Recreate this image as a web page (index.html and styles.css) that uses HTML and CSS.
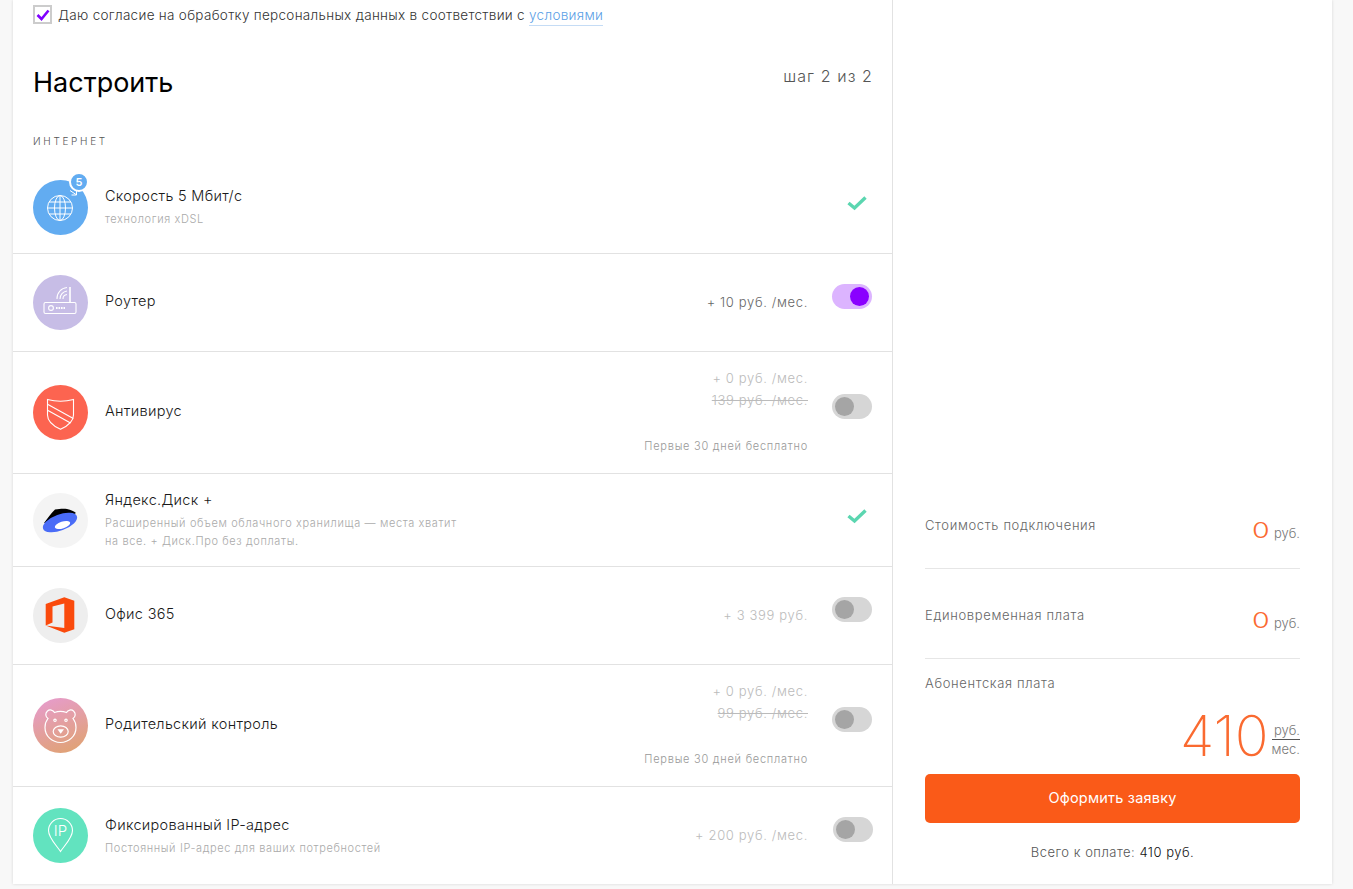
FILE: index.html
```html
<!DOCTYPE html>
<html lang="ru">
<head>
<meta charset="utf-8">
<title>Настроить</title>
<link rel="stylesheet" href="styles.css">
</head>
<body>
<main class="card">
  <section class="left">
    <label class="consent">
      <span class="checkbox"><svg width="14" height="12" viewBox="0 0 14 12"><path d="M1.5 6 L5.5 10 L12.5 1.5" fill="none" stroke="#8000ff" stroke-width="2.6"/></svg></span>
      <span>Даю согласие на обработку персональных данных в соответствии с <a class="link">условиями</a></span>
    </label>
    <header class="head">
      <h1>Настроить</h1>
      <span class="step">шаг 2 из 2</span>
    </header>
    <div class="group">ИНТЕРНЕТ</div>

    <div class="row row-first">
      <div class="ico">
        <svg width="55" height="55" viewBox="0 0 55 55"><circle cx="27.5" cy="27.5" r="27.5" fill="#62acf1"/><g fill="none" stroke="#fff" stroke-width="1"><circle cx="27" cy="28" r="12.5"/><ellipse cx="27" cy="28" rx="5.5" ry="12.5"/><path d="M27 15.5V40.5M14.5 28H39.5M16 22H38M16 34H38"/><path d="M37 10.5L43 14.5M43.5 10.5V15H38.5" stroke-width="1"/></g></svg>
        <span class="badge">5</span>
      </div>
      <div class="info"><div class="name">Скорость 5 Мбит/с</div><div class="sub">технология xDSL</div></div>
      <svg class="tick" width="20" height="16" viewBox="0 0 20 16"><path d="M1.5 8L7.5 13L18.5 2.5" fill="none" stroke="#5bd6b0" stroke-width="3.4"/></svg>
    </div>

    <div class="row row-s">
      <div class="ico"><svg width="55" height="55" viewBox="0 0 55 55"><circle cx="27.5" cy="27.5" r="27.5" fill="#c7bde6"/><g fill="none" stroke="#fff" stroke-width="1.1"><rect x="11" y="27.5" width="32" height="11" rx="1.5"/><path d="M37 27V12" stroke-width="1.6"/><circle cx="18" cy="33" r="2.4"/><path d="M23 33H32" stroke-width="2.2" stroke-dasharray="1.6 .9"/><path d="M24 24A11 11 0 0 1 34 12.5M27 24A8 8 0 0 1 34 16M30 24A4.5 4.5 0 0 1 34 19.5"/></g></svg></div>
      <div class="info single"><div class="name">Роутер</div></div>
      <div class="price dark">+ 10 руб. /мес.</div>
      <span class="toggle on"><i></i></span>
    </div>

    <div class="row row-l">
      <div class="ico"><svg width="55" height="55" viewBox="0 0 55 55"><circle cx="27.5" cy="27.5" r="27.5" fill="#fc6450"/><g fill="none" stroke="#fff" stroke-width="1.1"><path d="M14.5 14.5C22 16.5 33 16.5 40.5 14.5V30C40.5 37.5 33 41.8 27.5 44.3C22 41.8 14.5 37.5 14.5 30Z"/><path d="M15 19.5L40.3 33.5M15 25.5L37.5 38"/></g></svg></div>
      <div class="info single"><div class="name">Антивирус</div></div>
      <div class="price-box">
        <div class="price">+ 0 руб. /мес.</div>
        <div class="price old">139 руб. /мес.</div>
        <div class="note">Первые 30 дней бесплатно</div>
      </div>
      <span class="toggle"><i></i></span>
    </div>

    <div class="row row-m">
      <div class="ico"><svg width="55" height="55" viewBox="0 0 55 55"><circle cx="27.5" cy="27.5" r="27.5" fill="#f4f4f4"/><path d="M11 30C15 25 18 20 22 16.5C27 15.5 32 15.5 34 16C38 17 41 18 43 20L30 28Z" fill="#000"/><ellipse cx="27" cy="29.5" rx="18" ry="8" transform="rotate(-20 27 29.5)" fill="#4a6cf7"/><ellipse cx="29.5" cy="32" rx="8" ry="3.4" transform="rotate(-18 29.5 32)" fill="#fff"/></svg></div>
      <div class="info"><div class="name">Яндекс.Диск +</div><div class="sub">Расширенный объем облачного хранилища — места хватит<br>на все. + Диск.Про без доплаты.</div></div>
      <svg class="tick" width="20" height="16" viewBox="0 0 20 16"><path d="M1.5 8L7.5 13L18.5 2.5" fill="none" stroke="#5bd6b0" stroke-width="3.4"/></svg>
    </div>

    <div class="row row-s">
      <div class="ico"><svg width="55" height="55" viewBox="0 0 55 55"><circle cx="27.5" cy="27.5" r="27.5" fill="#eee"/><path fill-rule="evenodd" d="M12.7 16L31.3 9.3L41.3 12.7V41.3L31.3 44.7L12.7 37.5L31.3 40V15.5L19.5 18.5V34.5L12.7 37.5Z" fill="#fa4a0c"/></svg></div>
      <div class="info single"><div class="name">Офис 365</div></div>
      <div class="price lone">+ 3 399 руб.</div>
      <span class="toggle"><i></i></span>
    </div>

    <div class="row row-l">
      <div class="ico"><svg width="55" height="55" viewBox="0 0 55 55"><defs><linearGradient id="bear" x1="0.3" y1="0" x2="0.7" y2="1"><stop offset="0" stop-color="#e69cc9"/><stop offset="1" stop-color="#e0a274"/></linearGradient></defs><circle cx="27.5" cy="27.5" r="27.5" fill="url(#bear)"/><g fill="none" stroke="#fff" stroke-width="1.2"><path d="M15 20.5A4.6 4.6 0 1 1 21.5 14.5C25 13.3 30 13.3 33.5 14.5A4.6 4.6 0 1 1 40 20.5C42 23 43 26.5 43 29.5C43 38 36 44.5 27.5 44.5C19 44.5 12 38 12 29.5C12 26.5 13 23 15 20.5Z"/><ellipse cx="27.7" cy="33.5" rx="7.5" ry="5.7"/><circle cx="22" cy="22.3" r="1.2"/><circle cx="33" cy="22.3" r="1.2"/></g><path d="M24.5 31.2H31L27.7 35.8Z" fill="#fff"/></svg></div>
      <div class="info single"><div class="name">Родительский контроль</div></div>
      <div class="price-box">
        <div class="price">+ 0 руб. /мес.</div>
        <div class="price old">99 руб. /мес.</div>
        <div class="note">Первые 30 дней бесплатно</div>
      </div>
      <span class="toggle"><i></i></span>
    </div>

    <div class="row row-s last">
      <div class="ico"><svg width="55" height="55" viewBox="0 0 55 55"><circle cx="27.5" cy="27.5" r="27.5" fill="#62e3bf"/><path d="M27.5 43.5C24 38 15.5 30 15.5 22.5A12 12 0 0 1 39.5 22.5C39.5 30 31 38 27.5 43.5Z" fill="none" stroke="#fff" stroke-width="1.1"/><text x="27.5" y="28" text-anchor="middle" class="ip">IP</text></svg></div>
      <div class="info"><div class="name">Фиксированный IP-адрес</div><div class="sub">Постоянный IP-адрес для ваших потребностей</div></div>
      <div class="price lone">+ 200 руб. /мес.</div>
      <span class="toggle shift"><i></i></span>
    </div>
  </section>

  <aside class="right">
    <div class="cost">
      <span class="label">Стоимость подключения</span>
      <span class="amount"><b>0</b> руб.</span>
    </div>
    <div class="cost">
      <span class="label">Единовременная плата</span>
      <span class="amount"><b>0</b> руб.</span>
    </div>
    <div class="label monthly">Абонентская плата</div>
    <div class="total">
      <span class="big">410</span>
      <span class="frac"><span>руб.</span><span class="mes">мес.</span></span>
    </div>
    <button class="submit">Оформить заявку</button>
    <p class="sum">Всего к оплате: <em>410 руб.</em></p>
  </aside>
</main>
</body>
</html>
```
FILE: styles.css
```css
* { box-sizing: border-box; }
html, body { margin: 0; height: 889px; overflow: hidden; background: #f8f8f8; }
body { font-family: "Inter", "Noto Sans", sans-serif; font-weight: 300; color: #222; padding-left: 13px; }

.card {
  display: flex;
  width: 1319px;
  height: 884px;
  background: #fff;
  box-shadow: 0 0 3px rgba(0,0,0,.14);
}
.left { width: 880px; border-right: 1px solid #e2e2e2; display: flex; flex-direction: column; }
.right { flex: 1; padding: 0 32px 23px; display: flex; flex-direction: column; justify-content: flex-end; }

.consent { display: flex; align-items: center; gap: 6px; height: 23px; margin: 3px 0 0 20px; font-size: 13.5px; letter-spacing: .3px; color: #333; }
.checkbox { width: 19px; height: 19px; border: 2px solid #ccc; display: flex; align-items: center; justify-content: center; }
.link { color: #5aa0e6; border-bottom: 1px solid #c5dcf5; padding-bottom: 2px; }

.head { display: flex; justify-content: space-between; margin: 28px 19px 0 20px; height: 73px; }
h1 { margin: 13px 0 0; font-size: 27px; line-height: 32px; font-weight: 400; color: #000; }
.step { font-size: 16px; line-height: 22px; margin-top: 11px; color: #555; letter-spacing: 1.1px; }
.group { margin: 0 20px; font-size: 10px; height: 35px; line-height: 24px; letter-spacing: 2.7px; color: #555; font-weight: 300; padding-top: 2px; }

.row { display: flex; align-items: center; padding: 0 20px; border-bottom: 1px solid #e2e2e2; flex: none; }
.row-first { height: 92px; }
.row-s { height: 98px; }
.row-l { height: 122px; }
.row-m { height: 93px; }
.last { border-bottom: 0; height: 97px; }

.ico { position: relative; width: 55px; height: 55px; flex: none; margin-right: 17px; }
.ico svg { display: block; }
.badge { position: absolute; left: 36px; top: -8px; width: 20px; height: 20px; border-radius: 50%; background: #62acf1; border: 2px solid #fff; color: #fff; font-size: 11px; font-weight: 600; line-height: 16px; text-align: center; }
.ip { font-size: 15px; fill: #fff; font-weight: 300; }

.info { flex: 1; margin-top: -2px; }
.info.single { margin-top: -4px; }
.name { font-size: 14.5px; line-height: 20px; color: #1a1a1a; letter-spacing: .3px; }
.sub { font-size: 11px; line-height: 18px; color: #aaa; letter-spacing: .62px; margin-top: 4px; }
.row-m .info { margin-top: -1px; }
.last .info { margin-top: 0; }

.price-box { text-align: right; margin-top: -4px; }
.price { font-size: 13px; line-height: 22px; color: #bbb; letter-spacing: .65px; text-align: right; margin-right: -1px; }
.price.dark { color: #666; margin-top: -1px; }
.price.lone { margin-top: -2px; }
.last .price.lone { margin-right: 0; }
.price.old { text-decoration: line-through; margin-bottom: 27px; }
.note { font-size: 11px; line-height: 16px; color: #999; letter-spacing: .75px; margin-right: -1px; }

.toggle { display: flex; align-items: center; width: 40px; height: 25px; border-radius: 13px; background: #d6d6d6; margin: 0 0 12px 25px; padding: 0 3px; }
.toggle i { display: block; width: 19px; height: 19px; border-radius: 50%; background: #a5a5a5; }
.toggle.on { background: #dcb4ff; justify-content: flex-end; }
.toggle.on i { background: #8a00ff; }
.toggle.shift { margin-right: -1px; }
.tick { margin: 0 5px 9px 0; }

.cost { display: flex; justify-content: space-between; height: 90px; border-bottom: 1px solid #e6e6e6; padding-top: 37px; }
.label { font-size: 13px; line-height: 18px; color: #666; letter-spacing: .65px; }
.amount { font-size: 13px; color: #777; margin-top: 1px; }
.amount b { display: inline-block; font-size: 22px; line-height: 26px; color: #fb6a30; font-weight: 300; transform: scaleX(1.3); transform-origin: right center; margin-right: 1px; }
.monthly { margin-top: 15px; }
.total { display: flex; justify-content: flex-end; align-items: center; height: 64px; margin: 12px 0 6px; }
.big { font-size: 56px; line-height: 64px; color: #fa6a30; font-weight: 250; margin-right: 3px; }
.frac { display: flex; flex-direction: column; font-size: 13px; line-height: 18px; color: #777; text-align: right; margin-top: 6px; }
.mes { border-top: 1px solid #555; }
.submit { height: 49px; width: 100%; border: 0; border-radius: 5px; background: #fa5a18; color: #fff; font: 400 14.5px "Inter", sans-serif; letter-spacing: .2px; padding: 0 0 2px; }
.sum { margin: 20px 0 0; text-align: center; font-size: 13px; line-height: 18px; color: #555; letter-spacing: .5px; }
.sum em { font-style: normal; color: #111; font-weight: 300; }
```
